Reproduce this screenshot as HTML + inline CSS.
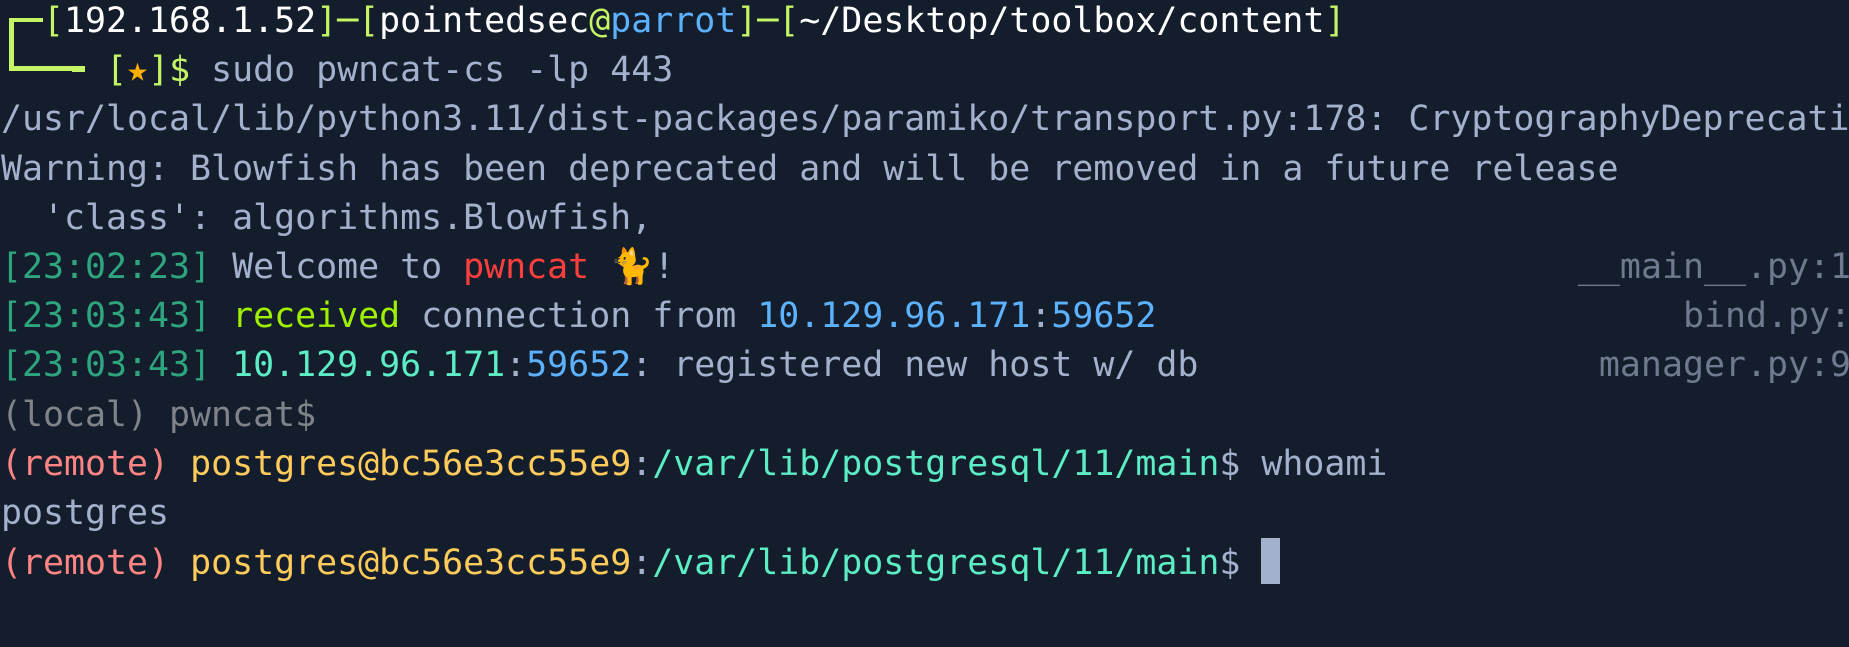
<!DOCTYPE html>
<html><head><meta charset="utf-8"><style>
html,body{margin:0;padding:0;background:#141d2b;width:1849px;height:647px;overflow:hidden;position:relative}
.t{position:absolute;left:1px;top:-3px;font-family:"DejaVu Sans Mono","Liberation Mono",monospace;font-size:34.9px;line-height:49.2px;color:#a4b1cd;width:1849px}
.l{position:relative;height:49.2px;overflow:hidden;white-space:pre}
.r{position:absolute;right:-1px;top:0;color:#6f7a8e}
.g{color:#c5f467}.w{color:#ffffff}.b{color:#5cb2ff}.y{color:#ffaf00}
.ts{color:#2ea57f}.red{color:#ff3e3e}.lg{color:#9fef00}.c{color:#5cecc6}
.gr{color:#7f838a}.pk{color:#ff8484}.ye{color:#ffcc5c}
.cur{display:inline-block;width:19px;height:46px;background:#a4b1cd;vertical-align:-10px}
.bx{position:absolute;background:#c5f467}
</style></head><body>
<div class="bx" style="left:9px;top:18px;width:5px;height:53px"></div>
<div class="bx" style="left:9px;top:18px;width:34px;height:4px"></div>
<div class="bx" style="left:9px;top:66px;width:64px;height:5px"></div>
<div class="bx" style="left:72px;top:66px;width:13px;height:6px"></div>
<div class="t">
<div class="l">  <span class="g">[</span><span class="w">192.168.1.52</span><span class="g">]─[</span><span class="w">pointedsec</span><span class="g">@</span><span class="b">parrot</span><span class="g">]─[</span><span class="w">~/Desktop/toolbox/content</span><span class="g">]</span></div>
<div class="l">     <span class="g">[</span><span class="y">★</span><span class="g">]$</span> sudo pwncat-cs -lp 443</div>
<div class="l">/usr/local/lib/python3.11/dist-packages/paramiko/transport.py:178: CryptographyDeprecationWarning</div>
<div class="l">Warning: Blowfish has been deprecated and will be removed in a future release</div>
<div class="l">  'class': algorithms.Blowfish,</div>
<div class="l"><span class="ts">[23:02:23]</span> Welcome to <span class="red">pwncat</span> <span style="color:#f5a623">🐈</span>!<span class="r">__main__.py:1</span></div>
<div class="l"><span class="ts">[23:03:43]</span> <span class="lg">received</span> connection from <span class="b">10.129.96.171</span>:<span class="b">59652</span><span class="r">bind.py:</span></div>
<div class="l"><span class="ts">[23:03:43]</span> <span class="c">10.129.96.171</span>:<span class="b">59652</span>: registered new host w/ db<span class="r">manager.py:9</span></div>
<div class="l"><span class="gr">(local) pwncat$</span></div>
<div class="l"><span class="pk">(remote)</span> <span class="ye">postgres@bc56e3cc55e9</span>:<span class="c">/var/lib/postgresql/11/main</span>$ whoami</div>
<div class="l">postgres</div>
<div class="l"><span class="pk">(remote)</span> <span class="ye">postgres@bc56e3cc55e9</span>:<span class="c">/var/lib/postgresql/11/main</span>$ <span class="cur"></span></div>
</div></body></html>
